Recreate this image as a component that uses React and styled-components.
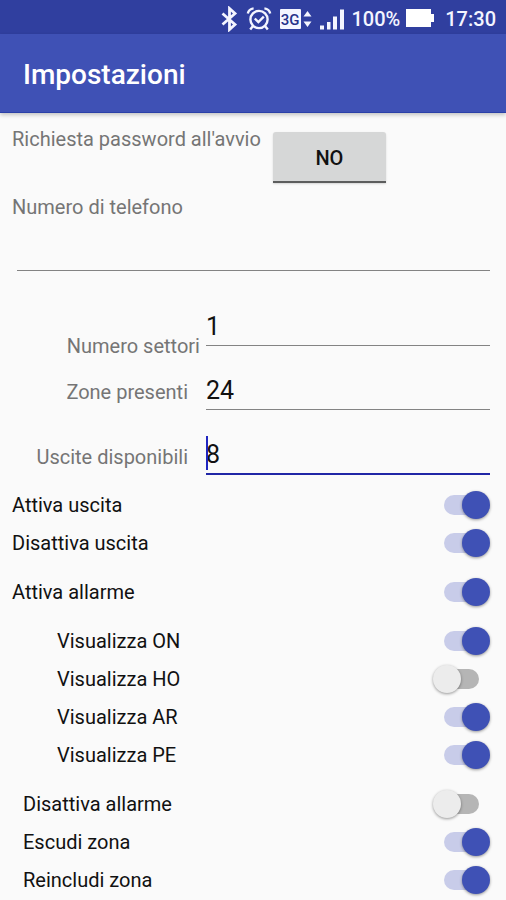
import { useState } from "react";
import styled, { createGlobalStyle } from "styled-components";

const GlobalStyle = createGlobalStyle`
  * {
    box-sizing: border-box;
  }

  body {
    margin: 0;
    background: #fafafa;
    font-family: Roboto, "Liberation Sans", sans-serif;
    font-size: 20px;
    line-height: 24px;
  }
`;

const StatusBar = styled.div`
  display: flex;
  justify-content: flex-end;
  align-items: center;
  height: 34px;
  padding: 3px 10px 0 0;
  background: #303f9f;
  color: #f4f5ff;
  font-weight: 500;

  svg {
    display: block;
    flex: none;
  }
`;

const StatusIcons = styled.div`
  display: flex;
  align-items: center;
  gap: 8px;
  margin-right: 6px;
`;

const Battery = styled.div`
  display: flex;
  margin: 0 11px 0 6px;
`;

const Header = styled.header`
  display: flex;
  align-items: center;
  height: 79px;
  padding: 4px 23px 0;
  border-bottom: 1px solid #2b40a8;
  background: #3f51b5;
  box-shadow: 0 2px 4px rgba(0, 0, 0, 0.22);
`;

const Title = styled.h1`
  margin: 0;
  color: #fff;
  font-size: 28px;
  font-weight: 500;
  line-height: 32px;
`;

const Form = styled.form`
  padding: 14px 16px 0 12px;
`;

const PasswordRow = styled.div`
  display: flex;
  align-items: flex-start;
  gap: 12px;
  margin-bottom: 12px;
`;

const Label = styled.label`
  color: #757575;
`;

const ToggleButton = styled.button`
  width: 113px;
  height: 51px;
  margin-top: 5px;
  padding: 3px 0 0;
  border: 0;
  border-bottom: 2px solid #5c5d5d;
  border-radius: 3px 3px 0 0;
  background: #d6d7d7;
  color: #111;
  font: inherit;
  font-weight: 500;
  box-shadow: 0 1px 2px rgba(0, 0, 0, 0.15);
`;

const TextInput = styled.input`
  display: block;
  width: 100%;
  height: ${({ $active }) => ($active ? 36 : 35)}px;
  padding: 0 0 4px;
  border: 0;
  border-bottom: ${({ $active }) =>
    $active ? "2px solid #2026a6" : "1px solid #838383"};
  border-radius: 0;
  outline: none;
  background: transparent;
  color: #111;
  font-family: inherit;
  font-size: 25px;
  line-height: 30px;
`;

const PhoneField = styled.div`
  padding: 17px 0 0 5px;
`;

const NumberRow = styled.div`
  display: grid;
  grid-template-columns: 194px 1fr;
  align-items: end;
  margin-top: ${({ $top }) => $top}px;
`;

const NumberLabel = styled(Label)`
  padding: 0 18px 6px 0;
  text-align: right;
`;

const LowLabel = styled(NumberLabel)`
  padding: 23px 6px 0 0;
`;

const NumberField = styled.div`
  position: relative;
  align-self: start;
`;

const Caret = styled.span`
  position: absolute;
  top: -3px;
  left: 0;
  width: 2px;
  height: 34px;
  background: #2026c0;
`;

const Group = styled.div`
  margin-top: 11px;
  padding-left: ${({ $indent }) => $indent}px;
`;

const SwitchRow = styled.label`
  display: flex;
  justify-content: space-between;
  align-items: center;
  height: 38px;
  color: #111;
`;

// Track and thumb share one grid cell so the thumb sits over the track.
const Switch = styled.input`
  appearance: none;
  display: grid;
  align-items: center;
  width: 57px;
  height: 28px;
  margin: 0;

  &::before,
  &::after {
    content: "";
    grid-area: 1 / 1;
  }

  &::before {
    justify-self: center;
    width: 35px;
    height: 20px;
    border-radius: 10px;
    background: #b5b5b5;
  }

  &::after {
    justify-self: start;
    width: 28px;
    height: 28px;
    border-radius: 50%;
    background: #ececec;
    box-shadow: 0 1px 3px rgba(0, 0, 0, 0.4);
  }

  &:checked::before {
    background: #c8cce9;
  }

  &:checked::after {
    justify-self: end;
    background: #3f51b5;
  }
`;

const groups = [
  {
    indent: 0,
    items: [
      { name: "Attiva uscita", on: true },
      { name: "Disattiva uscita", on: true },
    ],
  },
  { indent: 0, items: [{ name: "Attiva allarme", on: true }] },
  {
    indent: 45,
    items: [
      { name: "Visualizza ON", on: true },
      { name: "Visualizza HO", on: false },
      { name: "Visualizza AR", on: true },
      { name: "Visualizza PE", on: true },
    ],
  },
  {
    indent: 11,
    items: [
      { name: "Disattiva allarme", on: false },
      { name: "Escudi zona", on: true },
      { name: "Reincludi zona", on: true },
    ],
  },
];

const BluetoothIcon = () => (
  <svg width="18" height="26" viewBox="0 0 18 26" aria-hidden="true">
    <path
      d="M2.500 7.500 15 18.500 9.500 23.500V2.500L15 7.500 2.500 18.500"
      fill="none"
      stroke="#f4f5ff"
      strokeWidth="2.8"
    />
  </svg>
);

const AlarmIcon = () => (
  <svg width="26" height="26" viewBox="0 0 26 26" aria-hidden="true">
    <g fill="none" stroke="#f4f5ff" strokeWidth="2.4">
      <circle cx="13" cy="13.500" r="8.600" />
      <path d="M1.800 7.600C2.400 4.600 4.400 2.800 7.600 2.400M24.200 7.600C23.600 4.600 21.600 2.800 18.400 2.400" />
      <path d="m8.800 12.500 3.600 3.600 5.400-5.400" />
      <path d="m7 20-2.800 3.500M19 20l2.800 3.500" />
    </g>
  </svg>
);

const NetworkIcon = () => (
  <svg width="32" height="22" viewBox="0 0 32 22" aria-hidden="true">
    <rect y="1" width="21" height="20" rx="1" fill="#f4f5ff" />
    <text
      x="10"
      y="17"
      textAnchor="middle"
      fontFamily="Roboto, sans-serif"
      fontSize="15"
      fontWeight="500"
      fill="#26318a"
    >
      3G
    </text>
    <path d="m27.500 3 4 5.500h-8zM27.500 19l4-5.500h-8z" fill="#f4f5ff" />
  </svg>
);

const SignalIcon = () => (
  <svg width="25" height="22" viewBox="0 0 25 22" aria-hidden="true">
    <path
      d="M0 17.500h4V21.500H0zM7 14h3.500v7.500H7zM13 8.500h4v13h-4zM20 1.500h4v20h-4z"
      fill="#f4f5ff"
    />
  </svg>
);

const BatteryIcon = () => (
  <svg width="28" height="20" viewBox="0 0 28 20" aria-hidden="true">
    <path d="M0 0h25v5h3v8h-3v5H0z" fill="#fff" />
  </svg>
);

const App = () => {
  const [password, setPassword] = useState(false);

  return (
    <>
      <GlobalStyle />
      <StatusBar>
        <StatusIcons>
          <BluetoothIcon />
          <AlarmIcon />
          <NetworkIcon />
          <SignalIcon />
        </StatusIcons>
        <span>100%</span>
        <Battery>
          <BatteryIcon />
        </Battery>
        <span>17:30</span>
      </StatusBar>
      <Header>
        <Title>Impostazioni</Title>
      </Header>
      <Form>
        <PasswordRow>
          <Label htmlFor="password">Richiesta password all'avvio</Label>
          <ToggleButton
            id="password"
            type="button"
            onClick={() => setPassword(!password)}
          >
            {password ? "SI" : "NO"}
          </ToggleButton>
        </PasswordRow>
        <Label htmlFor="phone">Numero di telefono</Label>
        <PhoneField>
          <TextInput id="phone" type="tel" />
        </PhoneField>
        <NumberRow $top={40}>
          <LowLabel htmlFor="sectors">Numero settori</LowLabel>
          <NumberField>
            <TextInput id="sectors" inputMode="numeric" defaultValue="1" />
          </NumberField>
        </NumberRow>
        <NumberRow $top={17}>
          <NumberLabel htmlFor="zones">Zone presenti</NumberLabel>
          <NumberField>
            <TextInput id="zones" inputMode="numeric" defaultValue="24" />
          </NumberField>
        </NumberRow>
        <NumberRow $top={29}>
          <NumberLabel htmlFor="outputs">Uscite disponibili</NumberLabel>
          <NumberField>
            <TextInput
              id="outputs"
              inputMode="numeric"
              defaultValue="8"
              $active
            />
            <Caret />
          </NumberField>
        </NumberRow>
        {groups.map(({ indent, items }) => (
          <Group key={items[0].name} $indent={indent}>
            {items.map(({ name, on }) => (
              <SwitchRow key={name}>
                {name}
                <Switch type="checkbox" role="switch" defaultChecked={on} />
              </SwitchRow>
            ))}
          </Group>
        ))}
      </Form>
    </>
  );
};

export default App;
